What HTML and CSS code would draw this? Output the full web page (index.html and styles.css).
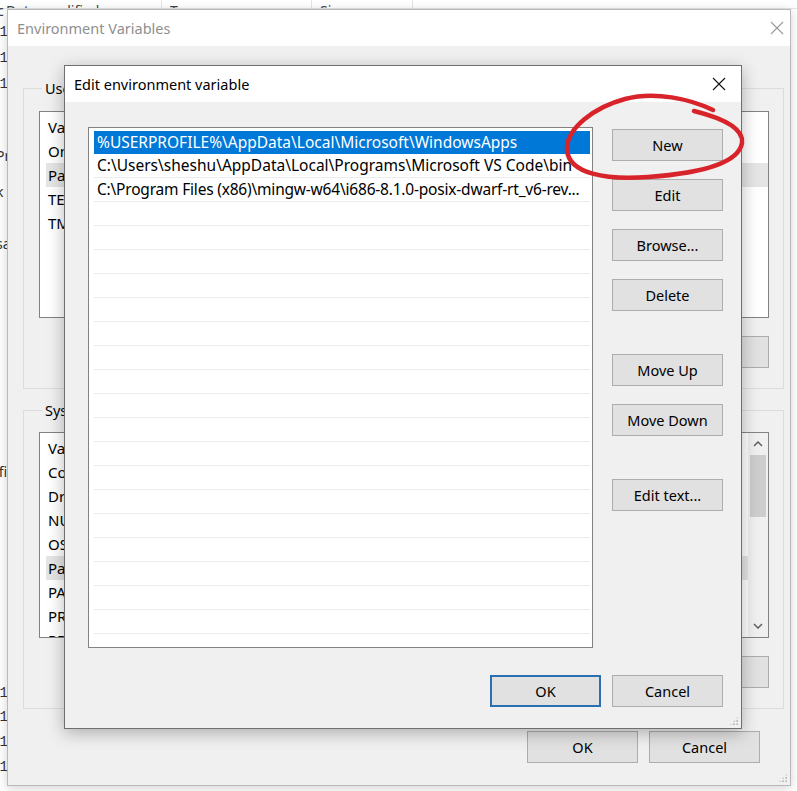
FILE: index.html
```html
<!DOCTYPE html>
<html>
<head>
<meta charset="utf-8">
<link rel="stylesheet" href="styles.css">
</head>
<body>
<div class="explorer">
  <div class="ex-head">
    <span class="ex-col c1">Date modified</span>
    <span class="ex-col c2">Type</span>
    <span class="ex-col c3">Size</span>
    <span class="ex-col c4"></span>
  </div>
  <div class="ex-rows">
    <div class="ex-row r0">c</div>
    <div class="ex-row">11/</div>
    <div class="ex-row">11/</div>
    <div class="ex-row">11/</div>
    <div class="ex-row r2">Pr</div>
    <div class="ex-row r2b">k</div>
    <div class="ex-row r3">sa</div>
    <div class="ex-row r4">afi</div>
    <div class="ex-row r5">11/</div>
    <div class="ex-row r6">11/</div>
    <div class="ex-row r6">11/</div>
    <div class="ex-row r6">11/</div>
  </div>
</div>

<div class="env">
  <div class="titlebar inactive">
    <span class="title">Environment Variables</span>
    <svg class="close" width="14" height="14" viewBox="0 0 14 14"><path d="M1 1L13 13M13 1L1 13" stroke="#9a9a9a" stroke-width="1.1"/></svg>
  </div>
  <div class="env-body">
    <fieldset class="group g1">
      <legend>User variables for sheshu</legend>
      <div class="listbox ulist">
        <div class="lrow">Variable</div>
        <div class="lrow">OneDrive</div>
        <div class="lrow sel-gray">Path</div>
        <div class="lrow">TEMP</div>
        <div class="lrow">TMP</div>
      </div>
      <div class="btnrow">
        <button class="btn">New...</button>
        <button class="btn">Edit...</button>
        <button class="btn">Delete</button>
      </div>
    </fieldset>
    <fieldset class="group g2">
      <legend>System variables</legend>
      <div class="listbox slist">
        <div class="rows">
          <div class="lrow">Variable</div>
          <div class="lrow">ComSpec</div>
          <div class="lrow">DriverData</div>
          <div class="lrow">NUMBER_OF_PROCESSORS</div>
          <div class="lrow">OS</div>
          <div class="lrow sel-gray">Path</div>
          <div class="lrow">PATHEXT</div>
          <div class="lrow">PROCESSOR_ARCHITECTURE</div>
          <div class="lrow">PROCESSOR_IDENTIFIER</div>
        </div>
        <div class="vscroll">
          <svg class="arr" width="10" height="6" viewBox="0 0 10 6"><path d="M1 5L5 1L9 5" stroke="#606060" stroke-width="1.5" fill="none"/></svg>
          <div class="thumb"></div>
          <div class="track"></div>
          <svg class="arr" width="10" height="6" viewBox="0 0 10 6"><path d="M1 1L5 5L9 1" stroke="#606060" stroke-width="1.5" fill="none"/></svg>
        </div>
      </div>
      <div class="btnrow">
        <button class="btn">New...</button>
        <button class="btn">Edit...</button>
        <button class="btn">Delete</button>
      </div>
    </fieldset>
    <div class="footer env-footer">
      <button class="btn">OK</button>
      <button class="btn">Cancel</button>
    </div>
    <div class="grip env-grip"></div>
  </div>
</div>

<div class="dialog">
  <div class="titlebar">
    <span class="title">Edit environment variable</span>
    <svg class="close" width="14" height="14" viewBox="0 0 14 14"><path d="M1 1L13 13M13 1L1 13" stroke="#111" stroke-width="1.1"/></svg>
  </div>
  <div class="dlg-body">
    <div class="dlg-main">
      <div class="listbox elist">
        <div class="erow selected">%USERPROFILE%\AppData\Local\Microsoft\WindowsApps</div>
        <div class="erow">C:\Users\sheshu\AppData\Local\Programs\Microsoft VS Code\bin</div>
        <div class="erow tight">C:\Program Files (x86)\mingw-w64\i686-8.1.0-posix-dwarf-rt_v6-rev...</div>
        <div class="erow"></div><div class="erow"></div><div class="erow"></div>
        <div class="erow"></div><div class="erow"></div><div class="erow"></div>
        <div class="erow"></div><div class="erow"></div><div class="erow"></div>
        <div class="erow"></div><div class="erow"></div><div class="erow"></div>
        <div class="erow"></div><div class="erow"></div><div class="erow"></div>
        <div class="erow"></div><div class="erow"></div><div class="erow"></div>
        <div class="erow last"></div>
      </div>
      <div class="btncol">
        <button class="btn">New</button>
        <button class="btn">Edit</button>
        <button class="btn">Browse...</button>
        <button class="btn">Delete</button>
        <button class="btn gap-big">Move Up</button>
        <button class="btn">Move Down</button>
        <button class="btn gap-big">Edit text...</button>
      </div>
    </div>
    <div class="footer dlg-footer">
      <button class="btn default">OK</button>
      <button class="btn">Cancel</button>
    </div>
    <div class="grip dlg-grip"></div>
  </div>
</div>

<svg class="annot" width="797" height="791" viewBox="0 0 797 791">
  <path d="M713 110 C690 99 655 91 625 99 C595 107 566 128 567 150 C569 174 606 180 648 177 C690 174 738 166 742 143 C744 128 722 118 694 111" fill="none" stroke="#d8232a" stroke-width="4.5" stroke-linecap="round" stroke-linejoin="round"/>
</svg>
</body>
</html>
```
FILE: styles.css
```css
* { box-sizing: border-box; }
html, body { margin: 0; padding: 0; }
body {
  width: 797px;
  height: 791px;
  position: relative;
  overflow: hidden;
  background: #fff;
  font-family: "Noto Sans", "Open Sans", sans-serif;
  font-size: 14.5px;
  color: #000;
}

/* background explorer */
.explorer { position: absolute; left: 0; top: 0; width: 797px; height: 791px; background: #fff; }
.ex-head { display: flex; height: 9px; overflow: hidden; border-bottom: 1px solid #e5e5e5; }
.ex-col { height: 9px; border-right: 1px solid #e5e5e5; color: #444; line-height: 22px; font-size: 14px; padding-left: 8px; display: block; }
.ex-col.c1 { width: 162px; padding-left: 0; text-indent: 6px; }
.ex-col.c2 { width: 150px; }
.ex-col.c3 { width: 101px; }
.ex-col.c4 { flex: 1; border-right: 0; }
.ex-rows { display: flex; flex-direction: column; }
.ex-row { height: 26px; line-height: 26px; font-family: "Liberation Mono", monospace; font-size: 14px; color: #333; margin-left: -9px; }
.ex-row.r0 { height: 16px; line-height: 16px; margin-left: -3px; font-family: "Noto Sans", sans-serif; margin-top: -6px; }
.ex-row.r2 { margin-top: 46px; font-family: "Noto Sans", sans-serif; margin-left: -4px; }
.ex-row.r2b { margin-top: 10px; font-family: "Noto Sans", sans-serif; margin-left: -4px; }
.ex-row.r3 { margin-top: 26px; font-family: "Noto Sans", sans-serif; margin-left: -4px; }
.ex-row.r4 { margin-top: 202px; font-family: "Noto Sans", sans-serif; margin-left: -9px; }
.ex-row.r5 { margin-top: 196px; height: 24px; line-height: 24px; }
.ex-row.r6 { height: 25px; line-height: 25px; }

/* windows */
.env {
  position: absolute;
  left: 7px; top: 9px;
  width: 784px; height: 777px;
  border: 1px solid #b9b9b9;
  background: #f0f0f0;
  box-shadow: 0 2px 10px rgba(0,0,0,0.18);
  display: flex; flex-direction: column;
}
.titlebar {
  height: 36px;
  flex: none;
  background: #fff;
  display: flex;
  align-items: center;
  justify-content: space-between;
  padding: 0 14px 0 9px;
}
.titlebar .title { font-size: 14.5px; color: #000; }
.titlebar.inactive .title { color: #8f8f8f; }
.env .titlebar { padding-right: 6px; }

.env-body { flex: 1; position: relative; padding: 0 6px 0 15px; display: flex; flex-direction: column; }
.group {
  margin: 0;
  border: 1px solid #dcdcdc;
  padding: 0 14px 20px 15px;
}
.group legend { padding: 0 3px; margin-left: 3px; line-height: 20px; font-size: 14.5px; }
.g1 { margin-top: 32px; padding-top: 13px; }
.g2 { margin-top: 11px; padding-top: 12px; }

.listbox { background: #fff; border: 1px solid #828282; }
.ulist { height: 207px; padding: 3px 0 0 6px; }
.slist { height: 206px; display: flex; overflow: hidden; }
.slist .rows { flex: 1; padding: 3px 0 0 6px; overflow: hidden; }
.lrow { height: 24px; line-height: 24px; padding-left: 2px; white-space: nowrap; font-size: 15px; }
.sel-gray { background: #e5e5e5; }
.vscroll { width: 20px; flex: none; background: #f0f0f0; display: flex; flex-direction: column; align-items: stretch; }
.vscroll .arr { align-self: center; margin: 8px 0; flex: none; }
.vscroll .thumb { height: 62px; margin: 0 2px 0 2px; background: #cdcdcd; flex: none; }
.vscroll .track { flex: 1; }

.btnrow { display: flex; justify-content: flex-end; gap: 11px; margin-top: 18px; }
.btn {
  width: 111px; height: 32px;
  background: #e1e1e1;
  border: 1px solid #adadad;
  font-family: inherit;
  font-size: 14.5px;
  color: #000;
  padding: 0;
  flex: none;
}
.footer { display: flex; justify-content: flex-end; gap: 11px; }
.env-footer { margin-top: 22px; padding-right: 24px; }

.grip {
  position: absolute; width: 10px; height: 10px;
  background-image: radial-gradient(circle, #b5b5b5 1.1px, transparent 1.3px);
  background-size: 3.3px 3.3px;
  clip-path: polygon(100% 0, 100% 100%, 0 100%);
}
.env-grip { right: 2px; bottom: 2px; }

/* edit dialog */
.dialog {
  position: absolute;
  left: 64px; top: 65px;
  width: 678px; height: 664px;
  border: 1px solid #6f6f6f;
  background: #f0f0f0;
  box-shadow: 0 4px 16px rgba(0,0,0,0.28);
  display: flex; flex-direction: column;
}
.dialog .titlebar { padding-right: 15px; }
.dlg-body { flex: 1; position: relative; padding: 25px 18px 0 23px; display: flex; flex-direction: column; }
.dlg-main { display: flex; gap: 19px; }
.elist { width: 505px; height: 521px; padding: 2px 2px 0 5px; overflow: hidden; }
.erow { height: 24px; line-height: 23px; border-bottom: 1px solid #ececec; padding-left: 3px; white-space: nowrap; overflow: hidden; font-size: 15.5px; }
.erow.tight { letter-spacing: -0.2px; }
.erow.selected { background: #0078d7; color: #fff; border-bottom-color: #0078d7; height: 23px; margin-top: 1px; }
.btncol { display: flex; flex-direction: column; gap: 18px; padding-top: 2px; }
.btncol .gap-big { margin-top: 25px; }
.dlg-footer { margin-top: 27px; }
.btn.default { border: 2px solid #2a6fb0; }
.dlg-grip { right: 2px; bottom: 2px; }

.annot { position: absolute; left: 0; top: 0; pointer-events: none; }
```
